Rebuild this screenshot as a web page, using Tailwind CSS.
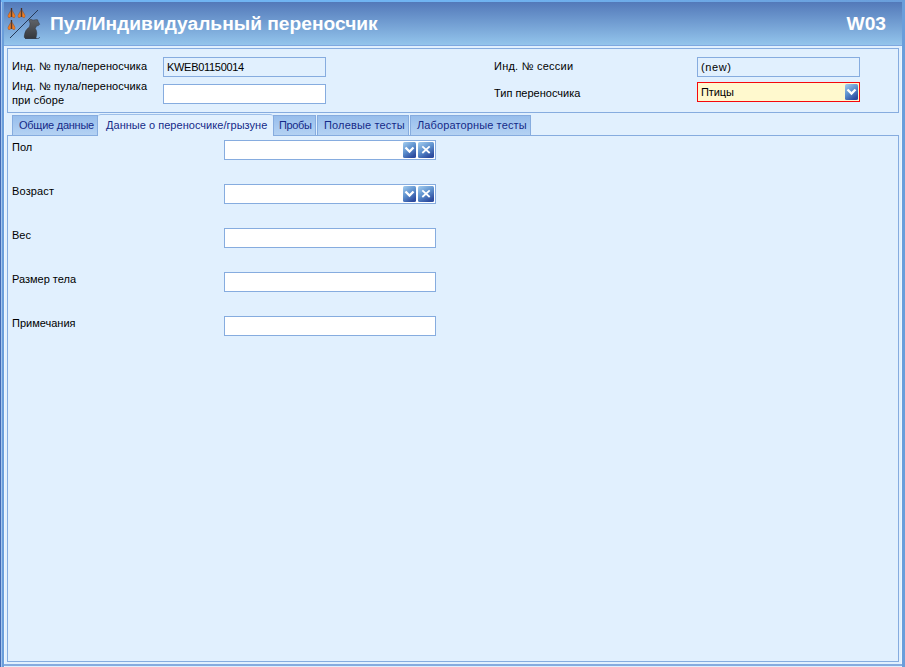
<!DOCTYPE html>
<html lang="ru">
<head>
<meta charset="utf-8">
<title>Пул/Индивидуальный переносчик</title>
<script src="https://cdn.jsdelivr.net/npm/@tailwindcss/browser@4"></script>
</head>
<body class="w-[905px] h-[667px] overflow-hidden bg-[#6a9edb] font-['Liberation_Sans',Arial,sans-serif] text-[11px] leading-[14px] text-black">
<svg class="absolute h-0 w-0">
  <defs>
    <linearGradient id="btn" x1="0" y1="0" x2=".6" y2="1"><stop offset="0" stop-color="#a4cef0"/><stop offset=".55" stop-color="#5c8fcd"/><stop offset="1" stop-color="#2e4da0"/></linearGradient>
    <linearGradient id="rat" x1="0" y1="0" x2="0" y2="1"><stop offset="0" stop-color="#606469"/><stop offset="1" stop-color="#35383c"/></linearGradient>
    <symbol id="down" viewBox="0 0 13 16"><rect width="13" height="16" rx="1.5" fill="url(#btn)"/><path d="M2.5 5.500 6.5 9.500 10.500 5.500" fill="none" stroke="#fff" stroke-width="2.300"/></symbol>
    <symbol id="clear" viewBox="0 0 16 16"><rect width="16" height="16" rx="1.5" fill="url(#btn)"/><path d="M4.300 4.300 11.700 11M11.700 4.300 4.300 11" fill="none" stroke="#fff" stroke-width="1.800"/></symbol>
    <symbol id="moth" viewBox="0 0 8 10"><path d="M4 0V3" stroke="#4a2e20" stroke-width="1.300"/><path d="M3.200 2.500 0 8 1.500 10 3.500 8.500ZM4.800 2.500 8 8 6.500 10 4.500 8.500Z" fill="#ee7c22" stroke="#7a4223" stroke-width=".4"/><path d="M4 2V9" stroke="#5a3a28" stroke-width="1"/></symbol>
  </defs>
</svg>
<div class="flex h-full flex-col border-l border-[#446bb5] bg-[#6a9edb] pr-[3px]">
  <div class="-mr-[3px] h-[2px] shrink-0 bg-gradient-to-r from-[#70b4f2] from-50% to-[#6a9edb]"></div>
  <div class="flex min-h-0 flex-1 flex-col border-l border-[#a5c6ef] pl-[2px]">
    <header class="flex h-[44px] shrink-0 items-center border-b border-[#7fa8df] bg-gradient-to-b from-[#5379b9] to-[#94c5ec] pr-[16px] pl-[2px] text-white">
      <svg class="mt-[1px] h-[36px] w-[36px]" viewBox="6 4 36 36">
        <use href="#moth" x="7.500" y="6" width="8" height="10"/><use href="#moth" x="17.500" y="6" width="8" height="10"/><use href="#moth" x="7.500" y="18" width="8" height="10"/>
        <path d="M10 36 38 8" stroke="#263956"/>
        <path d="M25 36.500H36Q40 36.800 39.500 35" fill="none" stroke="#40566f" stroke-width="1"/>
        <path d="M29 18.200Q30.500 16.500 33 18.200L35.500 17.700Q38.500 17 38.200 19.500L39.700 22.300Q38.600 24 36.500 24L35.300 26.500Q38 30 35.800 36.500H25.500Q23.500 36 24.500 32.500Q25 28 29.300 25Q31 22 29 18.200Z" fill="url(#rat)" stroke="#303741" stroke-width=".5"/>
      </svg>
      <h1 class="ml-[8px] text-[19.2px] leading-[24px] font-bold whitespace-nowrap">Пул/Индивидуальный переносчик</h1>
      <span class="ml-auto text-[19.2px] leading-[24px] font-bold">W03</span>
    </header>
    <main class="flex min-h-0 flex-1 flex-col border-x border-[#edf5fd] bg-[#e1f0fe] pt-[2px] pr-px pl-[2px]">
      <section class="flex h-[65px] w-[892px] shrink-0 border border-[#86acdf] pl-[4px]">
        <div class="w-[151px] pt-[10px] tracking-[0.09px] whitespace-nowrap">
          <p>Инд. № пула/переносчика</p>
          <p class="mt-[6px]">Инд. № пула/переносчика<br>при сборе</p>
        </div>
        <div class="w-[331px] pt-[8px]">
          <div class="flex h-[20px] w-[163px] items-center border border-[#86acdf] pl-[3px] tracking-[-0.3px]">KWEB01150014</div>
          <div class="mt-[7px] h-[20px] w-[163px] border border-[#86acdf] bg-white"></div>
        </div>
        <div class="w-[203px] pt-[10px]"><p class="tracking-[0.23px]">Инд. № сессии</p><p class="mt-[13px]">Тип переносчика</p></div>
        <div class="w-[163px] pt-[8px]">
          <div class="flex h-[20px] items-center border border-[#86acdf] pl-[3px] tracking-[0.6px]">(new)</div>
          <div class="mt-[5px] flex h-[20px] items-center justify-between border border-[#f5080c] bg-[#fff9ce] pr-[1px] pl-[3px] tracking-[-0.1px]"><span>Птицы</span><svg class="h-[16px] w-[13px]"><use href="#down"/></svg></div>
        </div>
      </section>
      <nav class="relative z-10 -mb-px flex h-[23px] shrink-0 items-end pl-[5px] whitespace-nowrap text-[#152a88]">
        <div class="flex h-[21px] w-[86px] items-center border border-[#86acdf] bg-gradient-to-b from-[#98beec] to-[#b4d2f3] pb-px pl-[6px] tracking-[-0.25px]">Общие данные</div>
        <div class="flex h-[22px] w-[175px] items-center rounded-t-[3px] border-t border-[#9dbfe9] bg-[#e1f0fe] pb-[2px] pl-[8px] tracking-[0.03px]">Данные о переносчике/грызуне</div>
        <div class="flex h-[21px] w-[43px] items-center border border-[#86acdf] bg-gradient-to-b from-[#98beec] to-[#b4d2f3] pb-px pl-[5px] tracking-[-0.35px]">Пробы</div>
        <div class="ml-px flex h-[21px] w-[92px] items-center border border-[#86acdf] bg-gradient-to-b from-[#98beec] to-[#b4d2f3] pb-px pl-[6px] tracking-[0.16px]">Полевые тесты</div>
        <div class="ml-px flex h-[21px] w-[121px] items-center border border-[#86acdf] bg-gradient-to-b from-[#98beec] to-[#b4d2f3] pb-px pl-[6px] tracking-[0.12px]">Лабораторные тесты</div>
      </nav>
      <section class="flex h-[527px] w-[892px] shrink-0 flex-col gap-[24px] border border-[#86acdf] pt-[4px] pl-[4px]">
        <div class="flex h-[20px]"><span class="w-[212px]">Пол</span><div class="flex h-[20px] w-[212px] items-center justify-end gap-[2px] border border-[#86acdf] bg-white pr-[1px]"><svg class="h-[16px] w-[13px]"><use href="#down"/></svg><svg class="h-[16px] w-[16px]"><use href="#clear"/></svg></div></div>
        <div class="flex h-[20px]"><span class="w-[212px] tracking-[0.15px]">Возраст</span><div class="flex h-[20px] w-[212px] items-center justify-end gap-[2px] border border-[#86acdf] bg-white pr-[1px]"><svg class="h-[16px] w-[13px]"><use href="#down"/></svg><svg class="h-[16px] w-[16px]"><use href="#clear"/></svg></div></div>
        <div class="flex h-[20px]"><span class="w-[212px]">Вес</span><div class="h-[20px] w-[212px] border border-[#86acdf] bg-white"></div></div>
        <div class="flex h-[20px]"><span class="w-[212px]">Размер тела</span><div class="h-[20px] w-[212px] border border-[#86acdf] bg-white"></div></div>
        <div class="flex h-[20px]"><span class="w-[212px]">Примечания</span><div class="h-[20px] w-[212px] border border-[#86acdf] bg-white"></div></div>
      </section>
      <div class="-mr-[2px] -ml-[3px] mt-[2px] h-[2px] shrink-0 bg-[#86acdf]"></div>
    </main>
  </div>
</div>
</body>
</html>
